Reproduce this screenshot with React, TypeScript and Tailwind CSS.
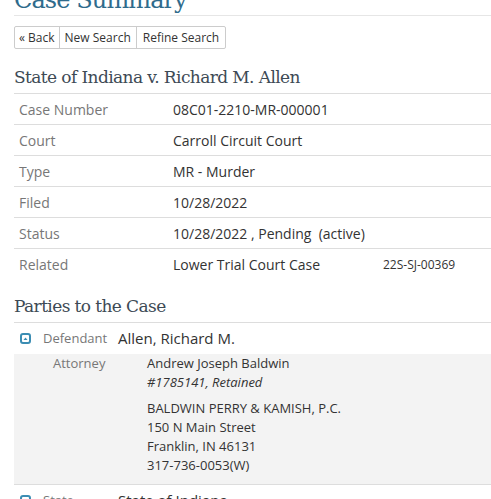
import React from "react";

const rows = [
  { label: "Case Number", value: "08C01-2210-MR-000001" },
  { label: "Court", value: "Carroll Circuit Court" },
  { label: "Type", value: "MR - Murder" },
  { label: "Filed", value: "10/28/2022" },
  { label: "Status", value: "10/28/2022 , Pending  (active)" },
];

function CollapseIcon() {
  return (
    <svg width="11" height="11" viewBox="0 0 11 11" className="shrink-0">
      <rect x="1" y="1" width="9" height="9" rx="2" fill="none" stroke="#3b8db3" strokeWidth="2" />
      <path d="M3.5 7 L5.5 4.5 L7.5 7 Z" fill="#3b8db3" />
    </svg>
  );
}

export default function App() {
  return (
    <div className="w-[491px] h-[499px] overflow-hidden bg-white pl-[14px] text-[#333]" style={{ fontFamily: "'Open Sans', sans-serif" }}>
      <div className="mt-[-14px] border-b border-[#e6e6e6] pb-[1px]">
        <h1 className="text-[24px] leading-[28px] tracking-[-0.9px] text-[#2f6b8c]" style={{ fontFamily: "'DejaVu Serif', serif" }}>
          Case Summary
        </h1>
      </div>

      <div className="mt-[10px] flex w-fit border border-[#ccc] rounded-[2px] text-[12px] leading-[21px] text-[#333]">
        <span className="px-[4px]">« Back</span>
        <span className="border-l border-[#ccc] px-[5px]">New Search</span>
        <span className="border-l border-[#ccc] px-[6px]">Refine Search</span>
      </div>

      <h2 className="mt-[16px] border-b border-[#ddd] pb-[4px] text-[17px] leading-[24px] tracking-[-0.6px] text-[#3d4a55]" style={{ fontFamily: "'DejaVu Serif', serif" }}>
        State of Indiana v. Richard M. Allen
      </h2>

      <div className="text-[14px]">
        {rows.map((r) => (
          <div key={r.label} className="flex h-[31px] items-center border-b border-[#ddd]">
            <span className="w-[159px] pl-[5px] text-[#777]">{r.label}</span>
            <span className="whitespace-pre">{r.value}</span>
          </div>
        ))}
        <div className="flex h-[31px] items-center">
          <span className="w-[159px] pl-[5px] text-[#777]">Related</span>
          <span className="w-[210px]">Lower Trial Court Case</span>
          <span className="text-[12px]">22S-SJ-00369</span>
        </div>
      </div>

      <h2 className="mt-[14px] border-b border-[#ddd] pb-[4px] text-[17px] leading-[24px] tracking-[-0.6px] text-[#3d4a55]" style={{ fontFamily: "'DejaVu Serif', serif" }}>
        Parties to the Case
      </h2>

      <div className="flex h-[31px] items-center pl-[6px]">
        <CollapseIcon />
        <span className="ml-[12px] w-[75px] text-[13px] text-[#777]">Defendant</span>
        <span className="text-[15px]">Allen, Richard M.</span>
      </div>

      <div className="flex bg-[#f3f3f3] pb-[9px] text-[13px] leading-[19px] border-b border-[#ddd]">
        <span className="w-[133px] pl-[39px] text-[#777]">Attorney</span>
        <div>
          <div>Andrew Joseph Baldwin</div>
          <div className="italic">#1785141, Retained</div>
          <div className="mt-[7px]">BALDWIN PERRY &amp; KAMISH, P.C.</div>
          <div>150 N Main Street</div>
          <div>Franklin, IN 46131</div>
          <div>317-736-0053(W)</div>
        </div>
      </div>

      <div className="flex h-[31px] items-center pl-[6px]">
        <CollapseIcon />
        <span className="ml-[12px] w-[75px] text-[13px] text-[#777]">State</span>
        <span className="text-[15px]">State of Indiana</span>
      </div>
    </div>
  );
}
